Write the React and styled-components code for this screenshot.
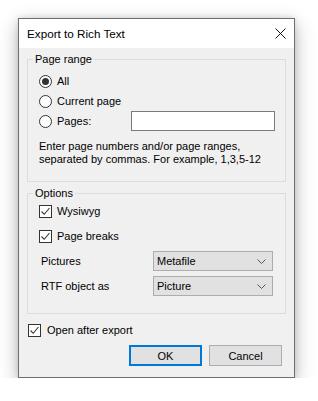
import React from 'react';
import styled, { createGlobalStyle } from 'styled-components';

const GlobalStyle = createGlobalStyle`
  html, body {
    margin: 0;
    padding: 0;
    background: #ffffff;
  }
  body {
    font-family: "Liberation Sans", Arial, sans-serif;
    font-size: 11px;
    color: #000;
    white-space: nowrap;
  }
`;

const Page = styled.div`
  padding: 18px 0 0 18px;
`;

const Window = styled.div`
  box-sizing: border-box;
  width: 277px;
  height: 360px;
  border: 1px solid #6f6f6f;
  background: #f0f0f0;
  box-shadow: 0 6px 18px rgba(0, 0, 0, 0.28), 0 0 6px rgba(0, 0, 0, 0.12);
  display: flex;
  flex-direction: column;
  overflow: hidden;
`;

const TitleBar = styled.div`
  height: 29px;
  flex: none;
  background: #ffffff;
  display: flex;
  align-items: center;
  justify-content: space-between;
  padding: 0 8px;
  font-size: 11.7px;
`;

const CloseButton = styled.div`
  width: 28px;
  height: 29px;
  margin-right: -8px;
  display: flex;
  align-items: center;
  justify-content: center;
`;

const Body = styled.div`
  flex: 1;
  padding: 3px 8px 10px 8px;
  display: flex;
  flex-direction: column;
`;

const Group = styled.fieldset`
  margin: ${p => p.$top || 0}px 0 0 0;
  padding: 0 0 ${p => p.$bottom || 0}px 5px;
  border: 1px solid #dcdcdc;
  min-width: 0;

  legend {
    padding: 0 2px;
    line-height: 16px;
    height: 16px;
  }
`;

const GroupInner = styled.div`
  padding: ${p => p.$top || 0}px 12px 0 6px;
  display: flex;
  flex-direction: column;
  gap: ${p => p.$gap || 0}px;
`;

const Row = styled.div`
  height: 20px;
  display: flex;
  align-items: center;
  justify-content: ${p => (p.$spread ? 'space-between' : 'flex-start')};
`;

const RadioCircle = styled.span`
  box-sizing: border-box;
  width: 13px;
  height: 13px;
  border-radius: 50%;
  border: 1px solid #333333;
  background: #ffffff;
  display: inline-flex;
  align-items: center;
  justify-content: center;
  margin-right: 5px;

  &::after {
    content: '';
    width: 7px;
    height: 7px;
    border-radius: 50%;
    background: ${p => (p.$checked ? '#333333' : 'transparent')};
  }
`;

const CheckBox = styled.span`
  box-sizing: border-box;
  width: 13px;
  height: 13px;
  border: 1px solid #333333;
  background: #ffffff;
  display: inline-flex;
  align-items: center;
  justify-content: center;
  margin-right: ${p => p.$gap || 5}px;
`;

const TextBox = styled.div`
  box-sizing: border-box;
  width: 144px;
  height: 20px;
  margin-right: -2px;
  border: 1px solid #7a7a7a;
  background: #ffffff;
`;

const Hint = styled.div`
  margin-top: 9px;
  line-height: 13px;
`;

const Select = styled.div`
  box-sizing: border-box;
  width: 120px;
  height: 20px;
  border: 1px solid #adadad;
  background: #e1e1e1;
  display: flex;
  align-items: center;
  justify-content: space-between;
  padding: 0 6px 0 3px;
`;

const FooterCheck = styled(Row)`
  margin-top: 6px;
  padding-left: 1px;
`;

const Buttons = styled.div`
  display: flex;
  justify-content: flex-end;
  gap: 7px;
  margin-top: 5px;
  padding-right: 4px;
`;

const Button = styled.div`
  box-sizing: border-box;
  width: 73px;
  height: 21px;
  display: flex;
  align-items: center;
  justify-content: center;
  background: #e1e1e1;
  border: ${p => (p.$primary ? '2px solid #0078d7' : '1px solid #adadad')};
`;

const Check = () => (
  <svg width="11" height="11" viewBox="0 0 11 11">
    <polyline points="1.5,5.5 4.2,8.3 9.5,2" fill="none" stroke="#333" strokeWidth="1.1" />
  </svg>
);

const Chevron = () => (
  <svg width="9" height="5" viewBox="0 0 9 5">
    <polyline points="0.5,0.5 4.5,4.5 8.5,0.5" fill="none" stroke="#555" strokeWidth="1" />
  </svg>
);

const App = () => (
  <>
    <GlobalStyle />
    <Page>
      <Window>
        <TitleBar>
          <span>Export to Rich Text</span>
          <CloseButton>
            <svg width="11" height="11" viewBox="0 0 11 11">
              <path d="M0.5 0.5 L10.5 10.5 M10.5 0.5 L0.5 10.5" stroke="#111" strokeWidth="1" />
            </svg>
          </CloseButton>
        </TitleBar>
        <Body>
          <Group $bottom={15}>
            <legend>Page range</legend>
            <GroupInner $top={4}>
              <Row><RadioCircle $checked />All</Row>
              <Row><RadioCircle />Current page</Row>
              <Row $spread>
                <span style={{ display: 'flex', alignItems: 'center' }}><RadioCircle />Pages:</span>
                <TextBox />
              </Row>
            </GroupInner>
            <GroupInner>
              <Hint>
                Enter page numbers and/or page ranges,<br />
                separated by commas. For example, 1,3,5-12
              </Hint>
            </GroupInner>
          </Group>
          <Group $top={3} $bottom={17}>
            <legend>Options</legend>
            <GroupInner $gap={5}>
              <Row><CheckBox><Check /></CheckBox>Wysiwyg</Row>
              <Row><CheckBox><Check /></CheckBox>Page breaks</Row>
              <Row $spread>
                <span style={{ paddingLeft: 2 }}>Pictures</span>
                <Select>Metafile<Chevron /></Select>
              </Row>
              <Row $spread>
                <span style={{ paddingLeft: 2 }}>RTF object as</span>
                <Select>Picture<Chevron /></Select>
              </Row>
            </GroupInner>
          </Group>
          <FooterCheck><CheckBox $gap={6}><Check /></CheckBox>Open after export</FooterCheck>
          <Buttons>
            <Button $primary>OK</Button>
            <Button>Cancel</Button>
          </Buttons>
        </Body>
      </Window>
    </Page>
  </>
);

export default App;
